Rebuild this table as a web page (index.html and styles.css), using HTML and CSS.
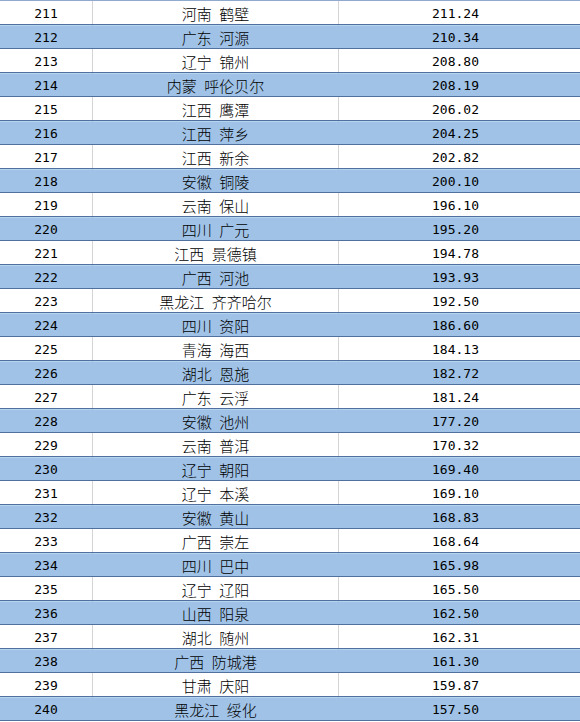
FILE: index.html
```html
<!DOCTYPE html>
<html lang="zh">
<head>
<meta charset="utf-8">
<title>排名</title>
<link rel="stylesheet" href="styles.css">
</head>
<body>
<div class="table">
  <div class="row"><div class="c rank">211</div><div class="c city">河南 鹤壁</div><div class="c val">211.24</div></div>
  <div class="row alt"><div class="c rank">212</div><div class="c city">广东 河源</div><div class="c val">210.34</div></div>
  <div class="row"><div class="c rank">213</div><div class="c city">辽宁 锦州</div><div class="c val">208.80</div></div>
  <div class="row alt"><div class="c rank">214</div><div class="c city">内蒙 呼伦贝尔</div><div class="c val">208.19</div></div>
  <div class="row"><div class="c rank">215</div><div class="c city">江西 鹰潭</div><div class="c val">206.02</div></div>
  <div class="row alt"><div class="c rank">216</div><div class="c city">江西 萍乡</div><div class="c val">204.25</div></div>
  <div class="row"><div class="c rank">217</div><div class="c city">江西 新余</div><div class="c val">202.82</div></div>
  <div class="row alt"><div class="c rank">218</div><div class="c city">安徽 铜陵</div><div class="c val">200.10</div></div>
  <div class="row"><div class="c rank">219</div><div class="c city">云南 保山</div><div class="c val">196.10</div></div>
  <div class="row alt"><div class="c rank">220</div><div class="c city">四川 广元</div><div class="c val">195.20</div></div>
  <div class="row"><div class="c rank">221</div><div class="c city">江西 景德镇</div><div class="c val">194.78</div></div>
  <div class="row alt"><div class="c rank">222</div><div class="c city">广西 河池</div><div class="c val">193.93</div></div>
  <div class="row"><div class="c rank">223</div><div class="c city">黑龙江 齐齐哈尔</div><div class="c val">192.50</div></div>
  <div class="row alt"><div class="c rank">224</div><div class="c city">四川 资阳</div><div class="c val">186.60</div></div>
  <div class="row"><div class="c rank">225</div><div class="c city">青海 海西</div><div class="c val">184.13</div></div>
  <div class="row alt"><div class="c rank">226</div><div class="c city">湖北 恩施</div><div class="c val">182.72</div></div>
  <div class="row"><div class="c rank">227</div><div class="c city">广东 云浮</div><div class="c val">181.24</div></div>
  <div class="row alt"><div class="c rank">228</div><div class="c city">安徽 池州</div><div class="c val">177.20</div></div>
  <div class="row"><div class="c rank">229</div><div class="c city">云南 普洱</div><div class="c val">170.32</div></div>
  <div class="row alt"><div class="c rank">230</div><div class="c city">辽宁 朝阳</div><div class="c val">169.40</div></div>
  <div class="row"><div class="c rank">231</div><div class="c city">辽宁 本溪</div><div class="c val">169.10</div></div>
  <div class="row alt"><div class="c rank">232</div><div class="c city">安徽 黄山</div><div class="c val">168.83</div></div>
  <div class="row"><div class="c rank">233</div><div class="c city">广西 崇左</div><div class="c val">168.64</div></div>
  <div class="row alt"><div class="c rank">234</div><div class="c city">四川 巴中</div><div class="c val">165.98</div></div>
  <div class="row"><div class="c rank">235</div><div class="c city">辽宁 辽阳</div><div class="c val">165.50</div></div>
  <div class="row alt"><div class="c rank">236</div><div class="c city">山西 阳泉</div><div class="c val">162.50</div></div>
  <div class="row"><div class="c rank">237</div><div class="c city">湖北 随州</div><div class="c val">162.31</div></div>
  <div class="row alt"><div class="c rank">238</div><div class="c city">广西 防城港</div><div class="c val">161.30</div></div>
  <div class="row"><div class="c rank">239</div><div class="c city">甘肃 庆阳</div><div class="c val">159.87</div></div>
  <div class="row alt"><div class="c rank">240</div><div class="c city">黑龙江 绥化</div><div class="c val">157.50</div></div>
</div>
</body>
</html>
```
FILE: styles.css
```css
html, body {
  margin: 0;
  padding: 0;
  background: #ffffff;
}
.table {
  width: 580px;
  border-top: 1px solid #8fa9cf;
  color: #000;
}
.row {
  display: grid;
  grid-template-columns: 93px 246px 241px;
  height: 23px;
  background: #ffffff;
}
.row.alt {
  background: #9fc2e6;
  border-top: 1px solid #50709f;
  border-bottom: 1px solid #50709f;
  box-shadow: inset 0 1px 0 #b6d3ef;
}
.c {
  height: 23px;
  box-sizing: border-box;
  text-align: center;
  white-space: nowrap;
  padding-top: 3px;
  line-height: 20px;
}
.row .rank, .row .city {
  border-right: 1px solid #d4d4d4;
}
.row.alt .rank, .row.alt .city {
  border-right-color: #9fc2e6;
}
.rank, .val {
  font-family: "DejaVu Sans Mono", monospace;
  font-size: 13px;
  padding-top: 4px;
  line-height: 18px;
}
.val {
  padding-right: 8px;
}
.city {
  font-family: "Noto Sans CJK SC", sans-serif;
  font-size: 15px;
  font-weight: 300;
  word-spacing: 4px;
}
```
